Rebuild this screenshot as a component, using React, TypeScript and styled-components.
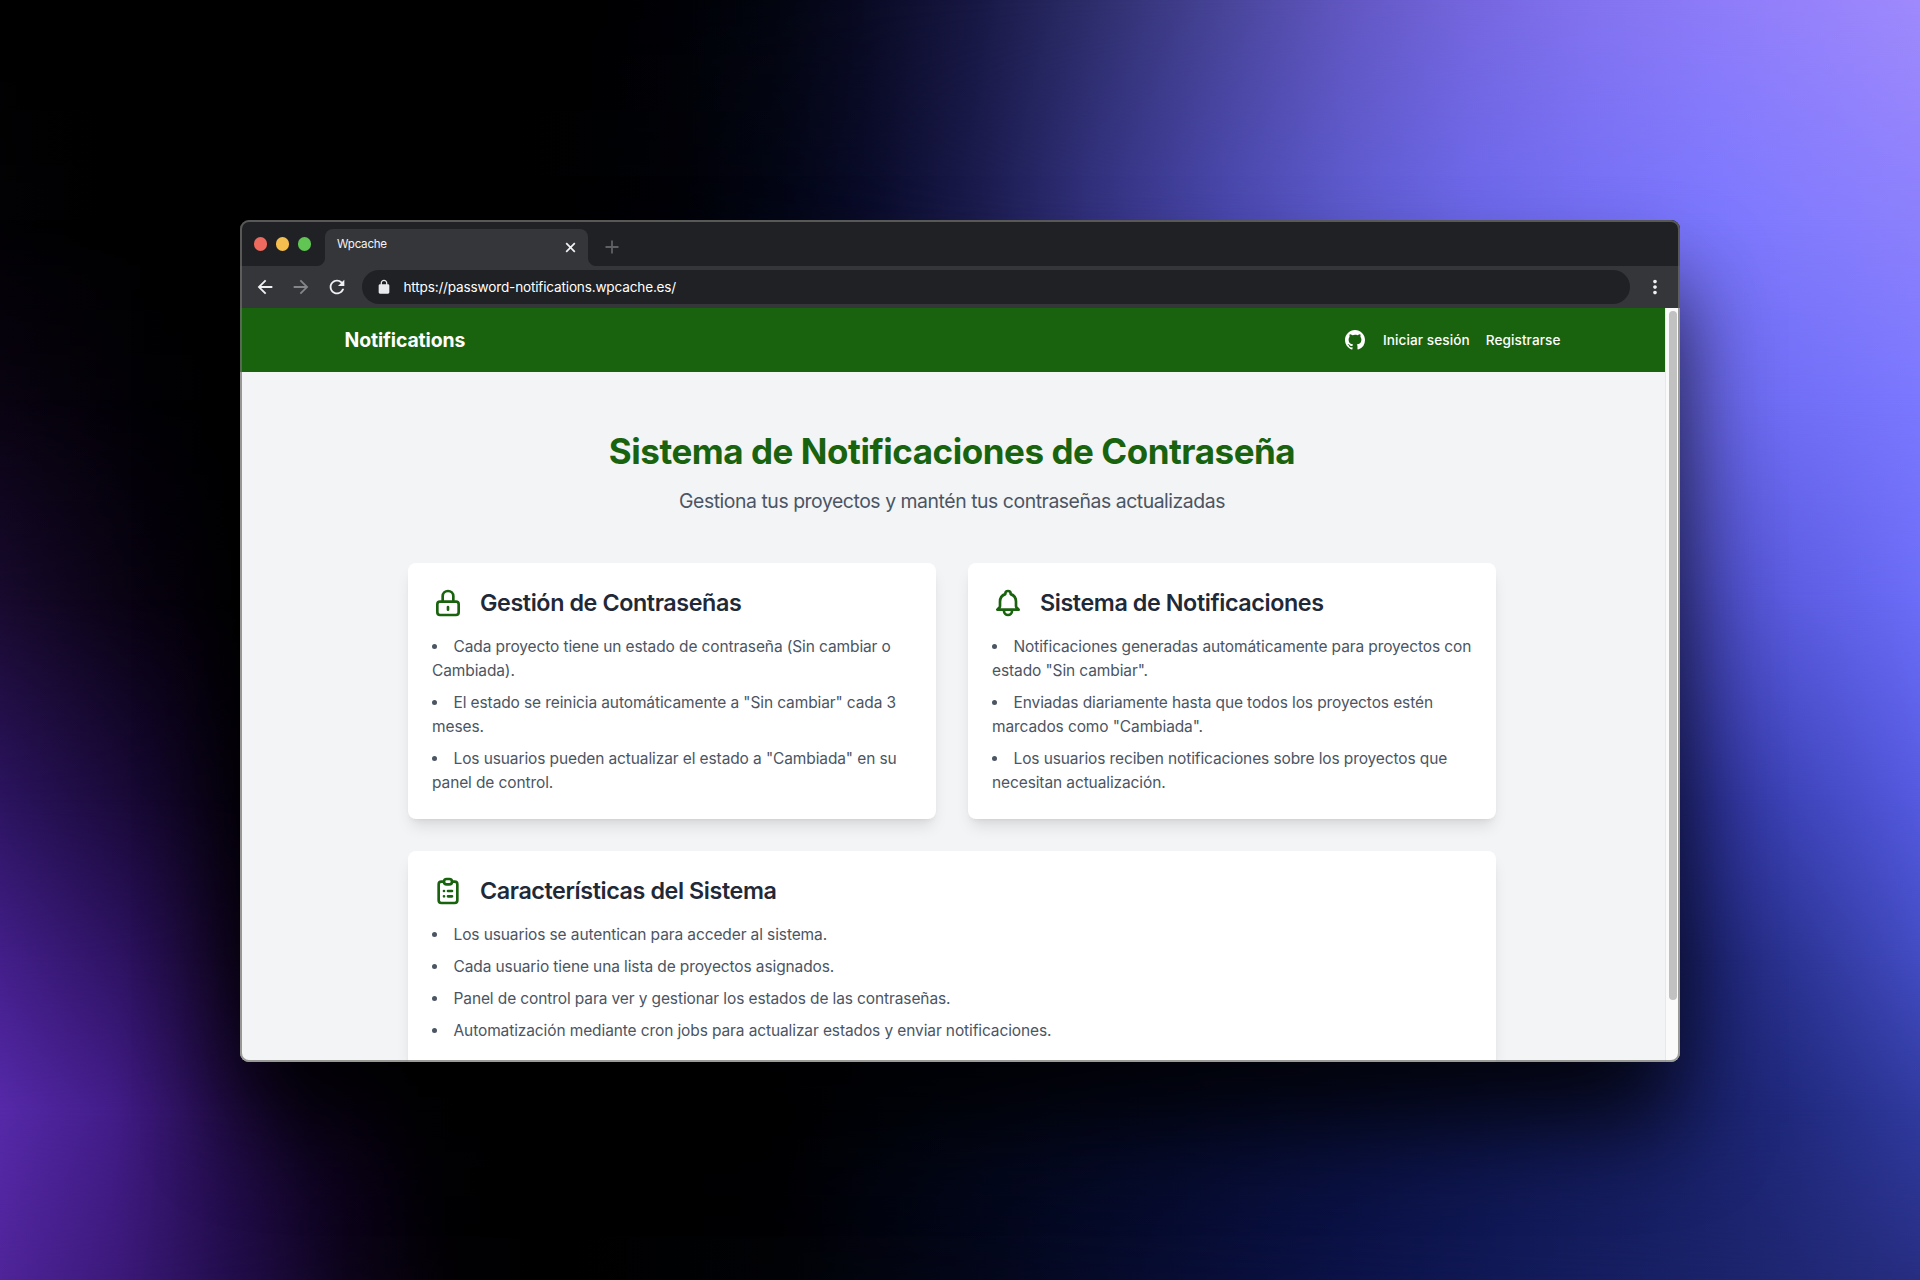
import React from "react";
import styled, { createGlobalStyle } from "styled-components";

const GlobalStyle = createGlobalStyle`
  *, *::before, *::after { box-sizing: border-box; }
  html, body { margin: 0; padding: 0; background: #000; overflow: hidden; }
  body { font-family: Inter, "Noto Sans", sans-serif; }
  h1, h2, p, ul { margin: 0; padding: 0; }
`;

/* Backdrop: horizontal colour bands, each one fading into the next. */
type Band = { y: number; stops: [string, number][] };

const bands: Band[] = [
  {
    y: 0,
    stops: [
      ["#000000", 0], ["#000000", 560], ["#010207", 680], ["#03050f", 770], ["#090a22", 860],
      ["#171743", 970], ["#2d2d6b", 1090], ["#484599", 1225], ["#6257c2", 1347],
      ["#7566de", 1470], ["#8373f0", 1592], ["#8e7cf9", 1715], ["#9f8afd", 1920],
    ],
  },
  {
    y: 220,
    stops: [
      ["#020104", 0], ["#000000", 120], ["#000000", 520], ["#010208", 680], ["#030616", 780],
      ["#0a0c2b", 870], ["#1c1c50", 980], ["#343383", 1100], ["#4a48ae", 1225],
      ["#5d5bcf", 1347], ["#6c68ea", 1470], ["#7570f6", 1592], ["#7c78ff", 1715], ["#8c80fc", 1920],
    ],
  },
  {
    y: 400,
    stops: [
      ["#090311", 0], ["#030107", 120], ["#000000", 260], ["#000000", 700],
      ["#3a38a0", 1225], ["#6462e0", 1600], ["#706ef5", 1780], ["#7b78ff", 1920],
    ],
  },
  {
    y: 600,
    stops: [
      ["#180a2e", 0], ["#0a0314", 120], ["#010002", 240], ["#000000", 700],
      ["#1d1d68", 1225], ["#3c3da6", 1600], ["#4b4cc4", 1700], ["#5c5de2", 1800], ["#6c6df8", 1920],
    ],
  },
  {
    y: 800,
    stops: [
      ["#2c1460", 0], ["#1a0a3a", 120], ["#06010e", 240], ["#000000", 400],
      ["#0a0d36", 1225], ["#1b1f6c", 1600], ["#2b3094", 1700], ["#3f45bb", 1800], ["#555ae0", 1920],
    ],
  },
  {
    y: 960,
    stops: [
      ["#431f8a", 0], ["#2e1363", 120], ["#0f041e", 245], ["#000000", 400],
      ["#080d33", 1225], ["#131a58", 1600], ["#1d2474", 1700], ["#2d3596", 1800], ["#434cc2", 1920],
    ],
  },
  {
    y: 1110,
    stops: [
      ["#5629a9", 0], ["#431d8a", 110], ["#240d4c", 220], ["#0f0422", 310], ["#030006", 420],
      ["#000000", 540], ["#000103", 780], ["#030717", 950], ["#060b2b", 1160], ["#0a113f", 1347],
      ["#0f1750", 1500], ["#161e63", 1650], ["#20297d", 1790], ["#303a9e", 1920],
    ],
  },
  {
    y: 1280,
    stops: [
      ["#4f2499", 0], ["#3b1979", 120], ["#220d4c", 230], ["#0c0319", 350], ["#020004", 450],
      ["#000000", 560], ["#010206", 780], ["#030618", 960], ["#070c31", 1160], ["#0b1247", 1347],
      ["#111957", 1500], ["#1a2268", 1700], ["#272e82", 1920],
    ],
  },
];

const Scene = styled.main`
  display: grid;
  grid-template: 1280px / 1920px;
  width: 1920px;
  height: 1280px;
  overflow: hidden;
`;

const BandLayer = styled.div<{ $band: Band; $from: number }>`
  grid-area: 1 / 1;
  background: linear-gradient(
    to right,
    ${({ $band }) => $band.stops.map(([c, x]) => `${c} ${x}px`).join(", ")}
  );
  ${({ $band, $from }) =>
    $band.y > 0 &&
    `mask-image: linear-gradient(to bottom, transparent ${$from}px, #000 ${$band.y}px);`}
`;

const Window = styled.section`
  grid-area: 1 / 1;
  position: relative;
  place-self: start center;
  margin-top: 220px;
  width: 1440px;
  height: 842px;
  display: flex;
  flex-direction: column;
  border-radius: 9px;
  background: #202124;
  box-shadow: 0 65px 95px -4px rgba(0, 0, 0, 0.85);

  &::after {
    content: "";
    position: absolute;
    inset: 0;
    border: 2px solid rgba(112, 112, 108, 0.7);
    border-radius: 9px;
    pointer-events: none;
  }
`;

const TabStrip = styled.header`
  display: flex;
  align-items: flex-end;
  height: 46px;
  padding-left: 14px;
  border-radius: 9px 9px 0 0;
  background: #202124;
`;

const Lights = styled.div`
  display: flex;
  align-self: center;
  gap: 8.8px;
  width: 71px;
  margin-top: 2px;
`;

const Light = styled.span<{ $color: string }>`
  width: 13.2px;
  height: 13.2px;
  border-radius: 50%;
  background: ${({ $color }) => $color};
`;

const Tab = styled.div`
  position: relative;
  display: flex;
  justify-content: space-between;
  width: 263px;
  height: 37px;
  padding: 7px 12px 0;
  border-radius: 8px 8px 0 0;
  background: #35363a;
  color: #f1f3f4;
  font-size: 11.6px;
  line-height: 16px;
  letter-spacing: -0.25px;

  &::before,
  &::after {
    content: "";
    position: absolute;
    bottom: 0;
    width: 8px;
    height: 8px;
  }
  &::before {
    left: -8px;
    background: radial-gradient(circle at 0 0, transparent 7.5px, #35363a 8.5px);
  }
  &::after {
    right: -8px;
    background: radial-gradient(circle at 100% 0, transparent 7.5px, #35363a 8.5px);
  }
`;

const CloseIcon = styled.svg`
  width: 11px;
  height: 11px;
  margin-top: 6px;
`;

const PlusIcon = styled.svg`
  width: 14px;
  height: 14px;
  margin: 0 0 12px 17px;
`;

const Toolbar = styled.div`
  display: flex;
  align-items: center;
  height: 42px;
  padding-left: 14px;
  background: #35363a;
`;

const ToolIcon = styled.svg<{ $faded?: boolean; $gap?: number }>`
  flex: none;
  width: 22px;
  height: 22px;
  margin-right: ${({ $gap = 14.2 }) => $gap}px;
  margin-bottom: 1px;
  fill: ${({ $faded }) => ($faded ? "#85868a" : "#f0f1f3")};
`;

const AddressBar = styled.div`
  display: flex;
  align-items: center;
  gap: 11.5px;
  width: 1268px;
  height: 34px;
  margin-right: 14px;
  padding-left: 14px;
  border-radius: 17px;
  background: #202124;
  color: #fff;
  font-size: 13.6px;
  line-height: 20px;
  letter-spacing: -0.18px;
`;

const Padlock = styled.svg`
  width: 16px;
  height: 16px;
  fill: #e8eaed;
`;

const Viewport = styled.div`
  display: flex;
  height: 754px;
  border-radius: 0 0 9px 9px;
  overflow: hidden;
`;

const Page = styled.div`
  width: 1425px;
  height: 754px;
  overflow: hidden;
  background: #f3f4f6;
`;

const ScrollTrack = styled.div`
  width: 15px;
  padding: 3px 0 0 3px;
  border-left: 1px solid #e8e8e8;
  background: #fafafa;
`;

const ScrollThumb = styled.div`
  width: 8px;
  height: 689px;
  border-radius: 4px;
  background: #c1c1c1;
`;

const NavBar = styled.nav`
  height: 64px;
  background: #1a630e;
  color: #fff;
`;

const NavInner = styled.div`
  display: flex;
  align-items: center;
  justify-content: space-between;
  width: 1280px;
  height: 64px;
  margin: 0 auto;
  padding: 0 32px;
`;

const Brand = styled.span`
  font-size: 19.4px;
  font-weight: 700;
  line-height: 28px;
  letter-spacing: -0.12px;
`;

const NavLinks = styled.div`
  display: flex;
  align-items: center;
  gap: 16px;
`;

const NavLink = styled.a`
  font-size: 13.6px;
  font-weight: 500;
  line-height: 20px;
  letter-spacing: 0.08px;
`;

const Content = styled.div`
  width: 1152px;
  margin-left: 136px;
  padding: 60px 32px;
`;

const Title = styled.h1`
  color: #1a630e;
  font-size: 35px;
  font-weight: 700;
  line-height: 39px;
  letter-spacing: -0.46px;
  text-align: center;
  white-space: nowrap;
`;

const Subtitle = styled.p`
  margin-top: 16px;
  color: #4b5563;
  font-size: 19.4px;
  line-height: 28px;
  letter-spacing: -0.45px;
  text-align: center;
`;

const Cards = styled.div`
  display: grid;
  grid-template-columns: 1fr 1fr;
  gap: 32px;
  margin-top: 48px;
`;

const Card = styled.article<{ $wide?: boolean }>`
  grid-column: ${({ $wide }) => ($wide ? "1 / -1" : "auto")};
  padding: 24px;
  border-radius: 8px;
  background: #fff;
  box-shadow: 0 10px 15px -3px rgba(0, 0, 0, 0.1), 0 4px 6px -4px rgba(0, 0, 0, 0.1);
`;

const CardHeader = styled.div`
  display: flex;
  align-items: center;
  gap: 16px;
  margin-bottom: 16px;
`;

const CardIcon = styled.svg`
  width: 32px;
  height: 32px;
  fill: none;
  stroke: #1a630e;
  stroke-width: 2;
  stroke-linecap: round;
  stroke-linejoin: round;
`;

const CardTitle = styled.h2`
  color: #1f2937;
  font-size: 23.3px;
  font-weight: 600;
  line-height: 32px;
  letter-spacing: -0.4px;
`;

const List = styled.ul`
  display: grid;
  gap: 8px;
  color: #4b5563;
  font-size: 15.5px;
  line-height: 24px;
  letter-spacing: -0.11px;
  list-style: disc inside;
`;

const Item = styled.li``;

type CardData = { title: string; icon: string; wide?: boolean; items: string[] };

const cards: CardData[] = [
  {
    title: "Gestión de Contraseñas",
    icon: "M12 15v2m-6 4h12a2 2 0 002-2v-6a2 2 0 00-2-2H6a2 2 0 00-2 2v6a2 2 0 002 2zm10-10V7a4 4 0 00-8 0v4h8z",
    items: [
      "Cada proyecto tiene un estado de contraseña (Sin cambiar o Cambiada).",
      'El estado se reinicia automáticamente a "Sin cambiar" cada 3 meses.',
      'Los usuarios pueden actualizar el estado a "Cambiada" en su panel de control.',
    ],
  },
  {
    title: "Sistema de Notificaciones",
    icon: "M15 17h5l-1.405-1.405A2.032 2.032 0 0118 14.158V11a6.002 6.002 0 00-4-5.659V5a2 2 0 10-4 0v.341C7.67 6.165 6 8.388 6 11v3.159c0 .538-.214 1.055-.595 1.436L4 17h5m6 0v1a3 3 0 11-6 0v-1m6 0H9",
    items: [
      'Notificaciones generadas automáticamente para proyectos con estado "Sin cambiar".',
      'Enviadas diariamente hasta que todos los proyectos estén marcados como "Cambiada".',
      "Los usuarios reciben notificaciones sobre los proyectos que necesitan actualización.",
    ],
  },
  {
    title: "Características del Sistema",
    wide: true,
    icon: "M9 5H7a2 2 0 00-2 2v12a2 2 0 002 2h10a2 2 0 002-2V7a2 2 0 00-2-2h-2M9 5a2 2 0 002 2h2a2 2 0 002-2M9 5a2 2 0 012-2h2a2 2 0 012 2m-3 7h3m-3 4h3m-6-4h.01M9 16h.01",
    items: [
      "Los usuarios se autentican para acceder al sistema.",
      "Cada usuario tiene una lista de proyectos asignados.",
      "Panel de control para ver y gestionar los estados de las contraseñas.",
      "Automatización mediante cron jobs para actualizar estados y enviar notificaciones.",
    ],
  },
];

export default function App() {
  return (
    <>
      <GlobalStyle />
      <Scene>
        {bands.map((band, i) => (
          <BandLayer key={band.y} $band={band} $from={i ? bands[i - 1].y : 0} />
        ))}
        <Window>
          <TabStrip>
            <Lights>
              <Light $color="#ed6a5e" />
              <Light $color="#f5bf4f" />
              <Light $color="#61c554" />
            </Lights>
            <Tab>
              Wpcache
              <CloseIcon viewBox="0 0 11 11" stroke="#f1f3f4" strokeWidth="1.7">
                <path d="M1.2 1.2l8.6 8.6M9.8 1.2L1.2 9.8" />
              </CloseIcon>
            </Tab>
            <PlusIcon viewBox="0 0 14 14" stroke="#5f6064" strokeWidth="1.8">
              <path d="M7 .5v13M.5 7h13" />
            </PlusIcon>
          </TabStrip>
          <Toolbar>
            <ToolIcon viewBox="0 0 24 24">
              <path d="M20 11H7.83l5.59-5.59L12 4l-8 8 8 8 1.41-1.41L7.83 13H20v-2z" />
            </ToolIcon>
            <ToolIcon viewBox="0 0 24 24" $faded>
              <path d="M12 4l-1.41 1.41L16.17 11H4v2h12.17l-5.58 5.59L12 20l8-8z" />
            </ToolIcon>
            <ToolIcon viewBox="0 0 24 24" $gap={13.6}>
              <path d="M17.65 6.35A7.958 7.958 0 0012 4c-4.42 0-7.99 3.58-7.99 8s3.57 8 7.99 8c3.73 0 6.84-2.55 7.73-6h-2.08A5.99 5.99 0 0112 18c-3.31 0-6-2.69-6-6s2.69-6 6-6c1.66 0 3.14.69 4.22 1.78L13 11h7V4l-2.35 2.35z" />
            </ToolIcon>
            <AddressBar>
              <Padlock viewBox="0 0 24 24">
                <path d="M18 8h-1V6c0-2.76-2.24-5-5-5S7 3.24 7 6v2H6c-1.1 0-2 .9-2 2v10c0 1.1.9 2 2 2h12c1.1 0 2-.9 2-2V10c0-1.1-.9-2-2-2zM8.9 8V6c0-1.71 1.39-3.1 3.1-3.1s3.1 1.39 3.1 3.1v2z" />
              </Padlock>
              https://password-notifications.wpcache.es/
            </AddressBar>
            <ToolIcon viewBox="0 0 24 24" $gap={0}>
              <path d="M12 8c1.1 0 2-.9 2-2s-.9-2-2-2-2 .9-2 2 .9 2 2 2zm0 2c-1.1 0-2 .9-2 2s.9 2 2 2 2-.9 2-2-.9-2-2-2zm0 6c-1.1 0-2 .9-2 2s.9 2 2 2 2-.9 2-2-.9-2-2-2z" />
            </ToolIcon>
          </Toolbar>
          <Viewport>
            <Page>
              <NavBar>
                <NavInner>
                  <Brand>Notifications</Brand>
                  <NavLinks>
                    <svg width="24" height="24" viewBox="0 0 24 24" fill="#fff">
                      <path
                        fillRule="evenodd"
                        d="M12 2C6.477 2 2 6.484 2 12.017c0 4.425 2.865 8.18 6.839 9.504.5.092.682-.217.682-.483 0-.237-.008-.868-.013-1.703-2.782.605-3.369-1.343-3.369-1.343-.454-1.158-1.11-1.466-1.11-1.466-.908-.62.069-.608.069-.608 1.003.07 1.531 1.032 1.531 1.032.892 1.53 2.341 1.088 2.91.832.092-.647.35-1.088.636-1.338-2.22-.253-4.555-1.113-4.555-4.951 0-1.093.39-1.988 1.029-2.688-.103-.253-.446-1.272.098-2.65 0 0 .84-.27 2.75 1.026A9.564 9.564 0 0112 6.844c.85.004 1.705.115 2.504.337 1.909-1.296 2.747-1.027 2.747-1.027.546 1.379.202 2.398.1 2.651.64.7 1.028 1.595 1.028 2.688 0 3.848-2.339 4.695-4.566 4.943.359.309.678.92.678 1.855 0 1.338-.012 2.419-.012 2.747 0 .268.18.58.688.482A10.019 10.019 0 0022 12.017C22 6.484 17.522 2 12 2z"
                      />
                    </svg>
                    <NavLink>Iniciar sesión</NavLink>
                    <NavLink>Registrarse</NavLink>
                  </NavLinks>
                </NavInner>
              </NavBar>
              <Content>
                <Title>Sistema de Notificaciones de Contraseña</Title>
                <Subtitle>Gestiona tus proyectos y mantén tus contraseñas actualizadas</Subtitle>
                <Cards>
                  {cards.map((card) => (
                    <Card key={card.title} $wide={card.wide}>
                      <CardHeader>
                        <CardIcon viewBox="0 0 24 24">
                          <path d={card.icon} />
                        </CardIcon>
                        <CardTitle>{card.title}</CardTitle>
                      </CardHeader>
                      <List>
                        {card.items.map((item) => (
                          <Item key={item}>{item}</Item>
                        ))}
                      </List>
                    </Card>
                  ))}
                </Cards>
              </Content>
            </Page>
            <ScrollTrack>
              <ScrollThumb />
            </ScrollTrack>
          </Viewport>
        </Window>
      </Scene>
    </>
  );
}
